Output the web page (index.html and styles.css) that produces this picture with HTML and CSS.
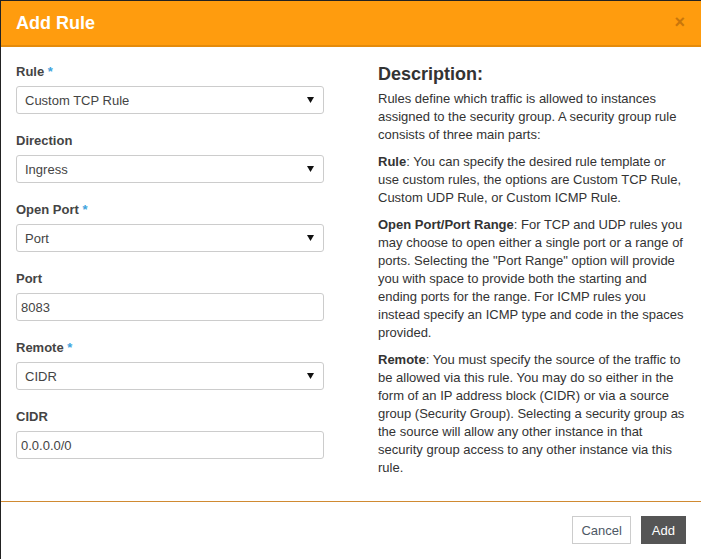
FILE: index.html
```html
<!DOCTYPE html>
<html>
<head>
<meta charset="utf-8">
<link rel="stylesheet" href="styles.css">
</head>
<body>
<div class="modal">
  <div class="modal-header">
    <h3 class="modal-title">Add Rule</h3>
    <span class="close">&#215;</span>
  </div>
  <div class="modal-body">
    <div class="form-col">
      <div class="form-group">
        <label>Rule <span class="req">*</span></label>
        <div class="select-wrap">
          <select><option>Custom TCP Rule</option></select>
          <svg class="caret" width="7" height="6" viewBox="0 0 7 6"><path d="M0 0H7L3.5 6Z" fill="#111"/></svg>
        </div>
      </div>
      <div class="form-group">
        <label>Direction</label>
        <div class="select-wrap">
          <select><option>Ingress</option></select>
          <svg class="caret" width="7" height="6" viewBox="0 0 7 6"><path d="M0 0H7L3.5 6Z" fill="#111"/></svg>
        </div>
      </div>
      <div class="form-group">
        <label>Open Port <span class="req">*</span></label>
        <div class="select-wrap">
          <select><option>Port</option></select>
          <svg class="caret" width="7" height="6" viewBox="0 0 7 6"><path d="M0 0H7L3.5 6Z" fill="#111"/></svg>
        </div>
      </div>
      <div class="form-group">
        <label>Port</label>
        <input type="text" value="8083">
      </div>
      <div class="form-group">
        <label>Remote <span class="req">*</span></label>
        <div class="select-wrap">
          <select><option>CIDR</option></select>
          <svg class="caret" width="7" height="6" viewBox="0 0 7 6"><path d="M0 0H7L3.5 6Z" fill="#111"/></svg>
        </div>
      </div>
      <div class="form-group">
        <label>CIDR</label>
        <input type="text" value="0.0.0.0/0">
      </div>
    </div>
    <div class="desc-col">
      <h3 class="desc-title">Description:</h3>
      <p>Rules define which traffic is allowed to instances assigned to the security group. A security group rule consists of three main parts:</p>
      <p><strong>Rule</strong>: You can specify the desired rule template or use custom rules, the options are Custom TCP Rule, Custom UDP Rule, or Custom ICMP Rule.</p>
      <p><strong>Open Port/Port Range</strong>: For TCP and UDP rules you may choose to open either a single port or a range of ports. Selecting the "Port Range" option will provide you with space to provide both the starting and ending ports for the range. For ICMP rules you instead specify an ICMP type and code in the spaces provided.</p>
      <p><strong>Remote</strong>: You must specify the source of the traffic to be allowed via this rule. You may do so either in the form of an IP address block (CIDR) or via a source group (Security Group). Selecting a security group as the source will allow any other instance in that security group access to any other instance via this rule.</p>
    </div>
  </div>
  <div class="modal-footer">
    <button class="btn btn-cancel">Cancel</button>
    <button class="btn btn-add">Add</button>
  </div>
</div>
</body>
</html>
```

FILE: styles.css
```css
html, body {
  margin: 0;
  padding: 0;
  background: #222;
}
body {
  font-family: "Liberation Sans", Arial, sans-serif;
  font-size: 13px;
  color: #333;
  padding: 1px 0 0 1px;
  height: 559px;
  box-sizing: border-box;
  overflow: hidden;
}
.modal {
  background: #fff;
  height: 558px;
  display: flex;
  flex-direction: column;
}
.modal-header {
  background: #ff9c0e;
  border-bottom: 2px solid #e58b0b;
  height: 44px;
  flex: none;
  display: flex;
  align-items: center;
  justify-content: space-between;
  padding: 0 15px;
}
.modal-title {
  margin: 0;
  color: #fff;
  font-size: 18px;
  font-weight: bold;
  line-height: 22px;
}
.close {
  color: #c9760a;
  font-size: 18px;
  font-weight: bold;
  line-height: 18px;
  margin-top: -3px;
  margin-right: 1px;
}
.modal-body {
  display: flex;
  padding: 16px 15px 0 15px;
  height: 455px;
  flex: none;
  box-sizing: border-box;
  border-bottom: 1px solid #d08a32;
}
.form-col {
  width: 308px;
  flex: none;
}
.form-group {
  margin-bottom: 18px;
}
label {
  display: block;
  font-weight: bold;
  color: #444;
  line-height: 18px;
  margin-bottom: 5px;
}
.req {
  color: #3ea3dd;
}
.select-wrap {
  position: relative;
}
select, input {
  display: block;
  width: 308px;
  height: 28px;
  box-sizing: border-box;
  border: 1px solid #ccc;
  border-radius: 3px;
  background: #fff;
  font-family: "Liberation Sans", Arial, sans-serif;
  font-size: 13px;
  color: #444;
  margin: 0;
}
select {
  appearance: none;
  -webkit-appearance: none;
  padding: 0 20px 0 8px;
}
input {
  padding: 0 4px;
}
.caret {
  position: absolute;
  right: 10px;
  top: 11px;
}
.desc-col {
  margin-left: 54px;
  width: 309px;
  flex: none;
}
.desc-title {
  margin: 0 0 5px 0;
  font-size: 18px;
  font-weight: bold;
  line-height: 22px;
  color: #333;
}
.desc-col p {
  margin: 0 0 9px 0;
  line-height: 18px;
}
.modal-footer {
  display: flex;
  justify-content: flex-end;
  padding: 14px 15px 0 0;
  gap: 10px;
}
.btn {
  height: 28px;
  font-family: "Liberation Sans", Arial, sans-serif;
  font-size: 13px;
  border-radius: 0;
  cursor: pointer;
}
.btn-cancel {
  background: #fff;
  border: 1px solid #ccc;
  color: #4d5865;
  padding: 0 8px;
}
.btn-add {
  background: #555;
  border: 1px solid #555;
  color: #fff;
  padding: 0 10px;
}
```
